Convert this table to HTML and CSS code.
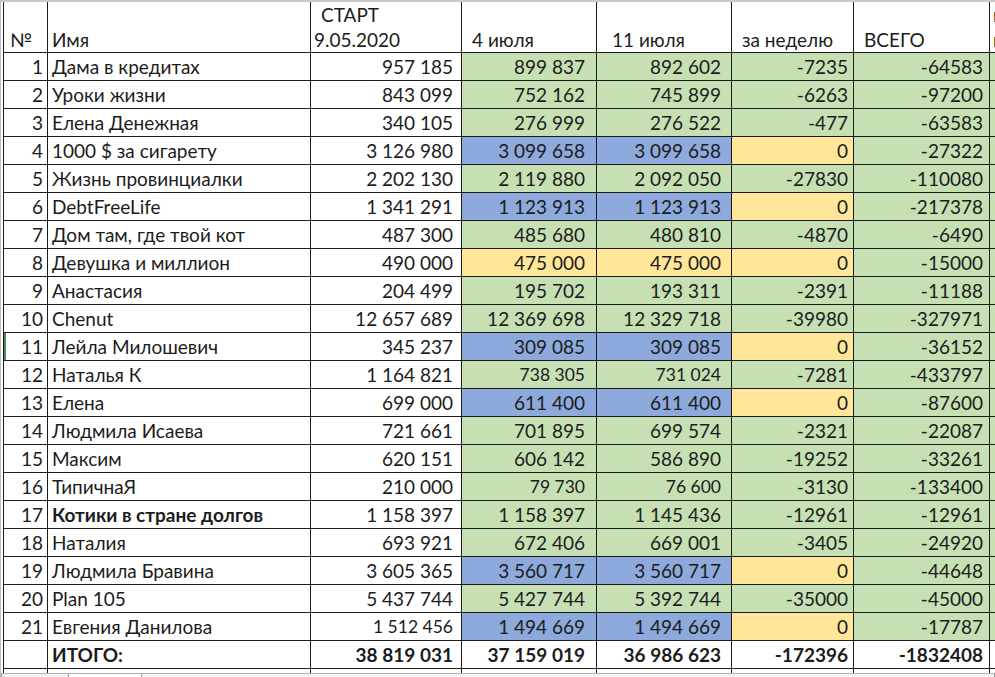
FILE: index.html
```html
<!DOCTYPE html>
<html lang="ru">
<head>
<meta charset="utf-8">
<title>Таблица</title>
<link rel="stylesheet" href="styles.css">
</head>
<body>
<div class="sheet">
  <table class="grid">
    <colgroup>
      <col class="c-no"><col class="c-name"><col class="c-start"><col class="c-d1"><col class="c-d2"><col class="c-week"><col class="c-total"><col class="c-extra">
    </colgroup>
    <thead>
      <tr class="head">
        <th class="no">№</th>
        <th class="name">Имя</th>
        <th class="start"><span class="indent">СТАРТ</span><br>9.05.2020</th>
        <th class="d1"><span class="indent">4 июля</span></th>
        <th class="d2"><span class="indent2">11 июля</span></th>
        <th class="week"><span class="indent">за неделю</span></th>
        <th class="total"><span class="indent">ВСЕГО</span></th>
        <th class="extra">в<br>к</th>
      </tr>
    </thead>
    <tbody>
      <tr><td class="no">1</td><td class="name">Дама в кредитах</td><td class="start">957 185</td><td class="d1 g">899 837</td><td class="d2 g">892 602</td><td class="week g">-7235</td><td class="total g">-64583</td><td class="extra g"></td></tr>
      <tr><td class="no">2</td><td class="name">Уроки жизни</td><td class="start">843 099</td><td class="d1 g">752 162</td><td class="d2 g">745 899</td><td class="week g">-6263</td><td class="total g">-97200</td><td class="extra g"></td></tr>
      <tr><td class="no">3</td><td class="name">Елена Денежная</td><td class="start">340 105</td><td class="d1 g">276 999</td><td class="d2 g">276 522</td><td class="week g">-477</td><td class="total g">-63583</td><td class="extra g"></td></tr>
      <tr><td class="no">4</td><td class="name">1000 $ за сигарету</td><td class="start">3 126 980</td><td class="d1 b">3 099 658</td><td class="d2 b">3 099 658</td><td class="week y">0</td><td class="total g">-27322</td><td class="extra g"></td></tr>
      <tr><td class="no">5</td><td class="name">Жизнь провинциалки</td><td class="start">2 202 130</td><td class="d1 g">2 119 880</td><td class="d2 g">2 092 050</td><td class="week g">-27830</td><td class="total g">-110080</td><td class="extra g"></td></tr>
      <tr><td class="no">6</td><td class="name">DebtFreeLife</td><td class="start">1 341 291</td><td class="d1 b">1 123 913</td><td class="d2 b">1 123 913</td><td class="week y">0</td><td class="total g">-217378</td><td class="extra g"></td></tr>
      <tr><td class="no">7</td><td class="name">Дом там, где твой кот</td><td class="start">487 300</td><td class="d1 g">485 680</td><td class="d2 g">480 810</td><td class="week g">-4870</td><td class="total g">-6490</td><td class="extra g"></td></tr>
      <tr><td class="no">8</td><td class="name">Девушка и миллион</td><td class="start">490 000</td><td class="d1 y">475 000</td><td class="d2 y">475 000</td><td class="week y">0</td><td class="total g">-15000</td><td class="extra g"></td></tr>
      <tr><td class="no">9</td><td class="name">Анастасия</td><td class="start">204 499</td><td class="d1 g">195 702</td><td class="d2 g">193 311</td><td class="week g">-2391</td><td class="total g">-11188</td><td class="extra g"></td></tr>
      <tr><td class="no">10</td><td class="name">Chenut</td><td class="start">12 657 689</td><td class="d1 g">12 369 698</td><td class="d2 g">12 329 718</td><td class="week g">-39980</td><td class="total g">-327971</td><td class="extra g"></td></tr>
      <tr class="sel"><td class="no">11</td><td class="name">Лейла Милошевич</td><td class="start">345 237</td><td class="d1 b">309 085</td><td class="d2 b">309 085</td><td class="week y">0</td><td class="total g">-36152</td><td class="extra g"></td></tr>
      <tr><td class="no">12</td><td class="name">Наталья К</td><td class="start">1 164 821</td><td class="d1 g sm">738 305</td><td class="d2 g sm">731 024</td><td class="week g">-7281</td><td class="total g">-433797</td><td class="extra g"></td></tr>
      <tr><td class="no">13</td><td class="name">Елена</td><td class="start">699 000</td><td class="d1 b">611 400</td><td class="d2 b">611 400</td><td class="week y">0</td><td class="total g">-87600</td><td class="extra g"></td></tr>
      <tr><td class="no">14</td><td class="name">Людмила Исаева</td><td class="start">721 661</td><td class="d1 g">701 895</td><td class="d2 g">699 574</td><td class="week g">-2321</td><td class="total g">-22087</td><td class="extra g"></td></tr>
      <tr><td class="no">15</td><td class="name">Максим</td><td class="start">620 151</td><td class="d1 g">606 142</td><td class="d2 g">586 890</td><td class="week g">-19252</td><td class="total g">-33261</td><td class="extra g"></td></tr>
      <tr><td class="no">16</td><td class="name">ТипичнаЯ</td><td class="start">210 000</td><td class="d1 g sm">79 730</td><td class="d2 g sm">76 600</td><td class="week g">-3130</td><td class="total g">-133400</td><td class="extra g"></td></tr>
      <tr><td class="no">17</td><td class="name bold">Котики в стране долгов</td><td class="start">1 158 397</td><td class="d1 g">1 158 397</td><td class="d2 g">1 145 436</td><td class="week g">-12961</td><td class="total g">-12961</td><td class="extra g"></td></tr>
      <tr><td class="no">18</td><td class="name">Наталия</td><td class="start">693 921</td><td class="d1 g">672 406</td><td class="d2 g">669 001</td><td class="week g">-3405</td><td class="total g">-24920</td><td class="extra g"></td></tr>
      <tr><td class="no">19</td><td class="name">Людмила Бравина</td><td class="start">3 605 365</td><td class="d1 b">3 560 717</td><td class="d2 b">3 560 717</td><td class="week y">0</td><td class="total g">-44648</td><td class="extra g"></td></tr>
      <tr><td class="no">20</td><td class="name">Plan 105</td><td class="start">5 437 744</td><td class="d1 g">5 427 744</td><td class="d2 g">5 392 744</td><td class="week g">-35000</td><td class="total g">-45000</td><td class="extra g"></td></tr>
      <tr><td class="no">21</td><td class="name">Евгения Данилова</td><td class="start sm">1 512 456</td><td class="d1 b">1 494 669</td><td class="d2 b">1 494 669</td><td class="week y">0</td><td class="total g">-17787</td><td class="extra g"></td></tr>
      <tr class="sum"><td class="no"></td><td class="name">ИТОГО:</td><td class="start">38 819 031</td><td class="d1">37 159 019</td><td class="d2">36 986 623</td><td class="week">-172396</td><td class="total">-1832408</td><td class="extra"></td></tr>
      <tr class="next"><td class="no"></td><td class="name"></td><td class="start"></td><td class="d1"></td><td class="d2"></td><td class="week"></td><td class="total"></td><td class="extra"></td></tr>
    </tbody>
  </table>
  <div class="tabs">
    <span class="tab"></span>
    <span class="tab active"></span>
    <span class="tab scroll"></span>
  </div>
</div>
</body>
</html>
```
FILE: styles.css
```css
html, body {
  margin: 0;
  padding: 0;
  background: #fff;
}

.sheet {
  width: 995px;
  height: 677px;
  overflow: hidden;
  position: relative;
  border-top: 2px solid #c8c8c8;
  box-sizing: border-box;
  padding-left: 2px;
  border-left: 1px solid #bdbdbd;
  font-family: "Lato", "Open Sans", sans-serif;
  font-size: 19px;
  color: #1c1c1c;
}

.grid {
  border-collapse: collapse;
  table-layout: fixed;
  width: 1010px;
}

.c-no { width: 44px; }
.c-name { width: 263px; }
.c-start { width: 151px; }
.c-d1 { width: 135px; }
.c-d2 { width: 135px; }
.c-week { width: 122px; }
.c-total { width: 136px; }
.c-extra { width: 24px; }

.grid th,
.grid td {
  border: 1px solid #1a1a1a;
  padding: 0;
  white-space: nowrap;
  overflow: hidden;
  line-height: 25px;
}

.grid tr { height: 28px; }

.head th {
  height: 50px;
  font-weight: normal;
  text-align: left;
  vertical-align: bottom;
  border-top: none;
  padding-left: 3px;
  padding-bottom: 0;
  line-height: 25px;
}

.head th.no { padding-left: 6px; }
.head th.name { padding-left: 4px; }
.head .indent { padding-left: 7px; }
.head .indent2 { padding-left: 12px; }

.grid td { text-align: right; vertical-align: middle; }
.grid td.no { padding-right: 4px; }
.grid td.name { text-align: left; padding-left: 4px; }
.grid td.start { padding-right: 8px; }
.grid td.d1 { padding-right: 11px; }
.grid td.d2 { padding-right: 10px; }
.grid td.week { padding-right: 5px; }
.grid td.total { padding-right: 6px; }

.grid th.extra,
.grid td.extra { border-right: none; }

.sm { font-size: 17.5px; }
.bold { font-weight: bold; }

.g { background: #c6e0b4; }
.b { background: #8ea9db; }
.y { background: #ffe699; }

.sum td { font-weight: bold; background: #fff; }

.sel td.no { box-shadow: inset 2px 0 0 #4a8a5a; }

.next { height: 6px !important; }
.next td { height: 6px; line-height: 6px; border-bottom: none; }

.tabs {
  position: absolute;
  left: 0;
  right: 0;
  bottom: 0;
  height: 3px;
  background: #e8e8e8;
  border-top: 1px solid #b4b4b4;
  display: flex;
}

.tab {
  height: 3px;
  border-left: 1px solid #9a9a9a;
  border-right: 1px solid #9a9a9a;
  width: 66px;
  background: #f2f2f2;
}

.tab.active {
  width: 72px;
  background: #fff;
  border: none;
}

.tab.scroll {
  flex: 1;
  background: #f4f4f4;
}
```
